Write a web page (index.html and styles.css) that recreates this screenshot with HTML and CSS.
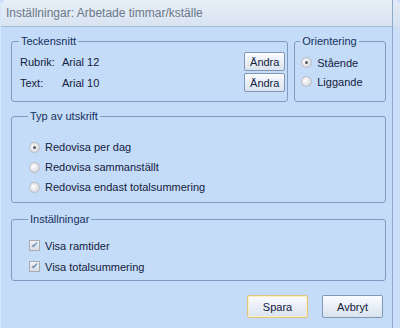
FILE: index.html
```html
<!DOCTYPE html>
<html lang="sv">
  <head>
    <meta charset="UTF-8" />
    <title>Inställningar: Arbetade timmar/kställe</title>
    <link rel="stylesheet" href="styles.css">
  </head>
  <body>
    <div class="window">
      <div class="main">
        <div class="titlebar">Inställningar: Arbetade timmar/kställe</div>

        <div class="content">
          <div class="top-row">
            <fieldset class="group font-group">
              <legend>Teckensnitt</legend>
              <div class="font-row">
                <span class="font-label">Rubrik:</span>
                <span class="font-value">Arial 12</span>
                <button class="btn small">Ändra</button>
              </div>
              <div class="font-row">
                <span class="font-label">Text:</span>
                <span class="font-value">Arial 10</span>
                <button class="btn small">Ändra</button>
              </div>
            </fieldset>

            <fieldset class="group orient-group">
              <legend>Orientering</legend>
              <div class="option"><span class="radio checked"></span>Stående</div>
              <div class="option"><span class="radio"></span>Liggande</div>
            </fieldset>
          </div>

          <fieldset class="group type-group">
            <legend>Typ av utskrift</legend>
            <div class="option"><span class="radio checked"></span>Redovisa per dag</div>
            <div class="option"><span class="radio"></span>Redovisa sammanställt</div>
            <div class="option"><span class="radio"></span>Redovisa endast totalsummering</div>
          </fieldset>

          <fieldset class="group settings-group">
            <legend>Inställningar</legend>
            <div class="option"><span class="check">&#10004;</span>Visa ramtider</div>
            <div class="option"><span class="check">&#10004;</span>Visa totalsummering</div>
          </fieldset>

          <div class="actions">
            <button class="btn wide default">Spara</button>
            <button class="btn wide">Avbryt</button>
          </div>
        </div>
      </div>
      <div class="frame"></div>
    </div>
  </body>
</html>
```

FILE: styles.css
```css
body {
  margin: 0;
  font-family: 'Liberation Sans', Arial, sans-serif;
  font-size: 11px;
  color: #14213d;
  background-color: #eef3f9;
}
.window {
  width: 400px;
  height: 328px;
  display: flex;
  background-color: #c4dcf8;
}
.main {
  width: 392px;
  display: flex;
  flex-direction: column;
  border-left: 1px solid #d6e6fa;
  box-sizing: border-box;
}
.frame {
  flex: 1;
  border-left: 1px solid #8ea9cc;
  border-top-right-radius: 5px;
  background: linear-gradient(#e2eaf4 0, #d6e2f0 26px, #cbe0f8 27px);
}
.titlebar {
  height: 26px;
  line-height: 27px;
  padding-left: 5px;
  font-size: 12px;
  color: #6b7889;
  border-bottom: 1px solid #a8bed8;
  border-top-left-radius: 5px;
  background: linear-gradient(#e7eef7, #d9e4f1);
}
.content {
  padding: 8px 6px 0 10px;
}
.top-row {
  display: flex;
  gap: 6px;
}
.group {
  margin: 0;
  border: 1px solid #7f9cc2;
  border-radius: 3px;
  padding: 0 8px;
  box-sizing: border-box;
}
.group legend {
  padding: 0 2px;
  margin-left: -1px;
  color: #15315e;
  line-height: 13px;
}
.font-group {
  width: 278px;
  height: 67px;
  padding: 4px 2px 0 8px;
}
.orient-group {
  width: 92px;
  height: 67px;
  padding: 5px 4px 0 6px;
}
.font-row {
  display: flex;
  align-items: center;
  height: 19px;
  margin-bottom: 2px;
}
.font-label {
  width: 42px;
}
.font-value {
  flex: 1;
}
.btn {
  font-family: inherit;
  font-size: 11px;
  color: #14213d;
  border: 1px solid #8397b5;
  border-radius: 2px;
  background: linear-gradient(#fbfcfe, #e9eff7 50%, #d9e3ef);
  padding: 0;
}
.btn.small {
  width: 41px;
  height: 19px;
}
.btn.wide {
  width: 61px;
  height: 23px;
}
.btn.default {
  border-color: #e2c47d;
  box-shadow: inset 0 0 0 1px #fbeec5;
}
.option {
  display: flex;
  align-items: center;
  height: 20px;
}
.radio {
  width: 9px;
  height: 9px;
  border-radius: 50%;
  margin-right: 5px;
  border: 1px solid #b9bcc2;
  background: radial-gradient(circle at 40% 40%, #ffffff, #d8dadf 70%);
  display: flex;
  align-items: center;
  justify-content: center;
}
.radio.checked::after {
  content: '';
  width: 3px;
  height: 3px;
  border-radius: 50%;
  background-color: #56595f;
}
.orient-group .option {
  height: 19px;
}
.type-group {
  height: 93px;
  margin-top: 8px;
  padding: 14px 8px 0 17px;
}
.settings-group {
  height: 68px;
  margin-top: 10px;
  padding: 9px 8px 0 17px;
}
.settings-group .option {
  height: 21px;
}
.check {
  width: 9px;
  height: 9px;
  margin-right: 5px;
  border: 1px solid #a7abb3;
  background: linear-gradient(#f2f3f5, #d9dce1);
  color: #6f8fb8;
  font-size: 9px;
  line-height: 9px;
  text-align: center;
}
.actions {
  display: flex;
  justify-content: flex-end;
  gap: 14px;
  margin-top: 14px;
  padding-right: 3px;
}
```
